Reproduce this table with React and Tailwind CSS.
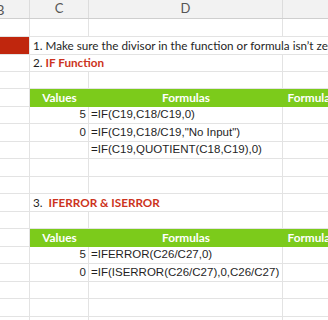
const ui = "font-['Lato','Open_Sans',sans-serif]";
const mono = "font-['Liberation_Sans','Arial',sans-serif]";

const rows = [
  { h: 18 },
  { h: 18, kind: "note", red: true, text: "1. Make sure the divisor in the function or formula isn\u2019t zero or a blank cell" },
  { h: 17, kind: "title", num: "2.", title: "IF Function" },
  { h: 17 },
  { h: 18, kind: "head" },
  { h: 17, value: "5", formula: "=IF(C19,C18/C19,0)" },
  { h: 18, value: "0", formula: '=IF(C19,C18/C19,"No Input")' },
  { h: 17, value: "", formula: "=IF(C19,QUOTIENT(C18,C19),0)" },
  { h: 18 },
  { h: 17 },
  { h: 18, kind: "title", num: "3.", title: "IFERROR & ISERROR", gap: true },
  { h: 17 },
  { h: 18, kind: "head" },
  { h: 17, value: "5", formula: "=IFERROR(C26/C27,0)" },
  { h: 18, value: "0", formula: "=IF(ISERROR(C26/C27),0,C26/C27)" },
  { h: 17 },
  { h: 18 },
  { h: 18 },
];

function Row({ row }) {
  const line = "border-b border-[#e3e3e3]";
  const b = `w-[30px] shrink-0 border-r border-[#e3e3e3] ${line} ${row.red ? "bg-[#c0260d]" : ""}`;

  if (row.kind === "head") {
    return (
      <div className="flex" style={{ height: row.h }}>
        <div className={b} />
        <div className={`flex flex-1 items-center bg-[#7ccb1b] text-[11.8px] font-bold text-white ${ui}`}>
          <div className="w-[59px] shrink-0 text-center">Values</div>
          <div className="w-[194px] shrink-0 text-center">Formulas</div>
          <div className="w-[57px] shrink-0 whitespace-nowrap text-center">Formulas</div>
        </div>
      </div>
    );
  }

  if (row.kind === "note" || row.kind === "title") {
    return (
      <div className="flex" style={{ height: row.h }}>
        <div className={b} />
        <div className={`relative flex flex-1 items-center ${line}`}>
          {row.kind === "title" && (
            <div className="absolute left-[252px] top-0 h-full border-r border-[#e3e3e3]" />
          )}
          <span className={`relative whitespace-nowrap pl-[3px] text-[11.7px] text-[#1f1f1f] ${ui}`}>
            {row.kind === "note" ? (
              row.text
            ) : (
              <>
                {row.num}
                {row.gap ? "\u00a0 " : " "}
                <span className="font-bold text-[#cc3320]">{row.title}</span>
              </>
            )}
          </span>
        </div>
      </div>
    );
  }

  return (
    <div className="flex" style={{ height: row.h }}>
      <div className={b} />
      <div className={`flex w-[59px] shrink-0 items-center justify-end border-r border-[#e3e3e3] pr-[2px] text-[11.5px] text-[#1f1f1f] ${line} ${mono}`}>
        {row.value}
      </div>
      <div className={`flex w-[194px] shrink-0 items-center whitespace-nowrap border-r border-[#e3e3e3] pl-[2px] text-[11.5px] text-[#1f1f1f] ${line} ${mono}`}>
        {row.formula}
      </div>
      <div className={`flex-1 ${line}`} />
    </div>
  );
}

export default function App() {
  return (
    <div className="h-[320px] w-[328px] overflow-hidden bg-white">
      <div className={`flex h-[19px] border-b border-[#cfcfcf] bg-[#f2f2f2] text-[13px] text-[#555] ${ui}`}>
        <div className="relative w-[30px] shrink-0 overflow-hidden border-r border-[#dcdcdc]">
          <span className="absolute left-[-4px] top-[1px]">B</span>
        </div>
        <div className="flex w-[59px] shrink-0 items-center justify-center border-r border-[#dcdcdc]">C</div>
        <div className="flex w-[194px] shrink-0 items-center justify-center border-r border-[#dcdcdc]">D</div>
        <div className="flex-1" />
      </div>
      {rows.map((row, i) => (
        <Row key={i} row={row} />
      ))}
    </div>
  );
}
